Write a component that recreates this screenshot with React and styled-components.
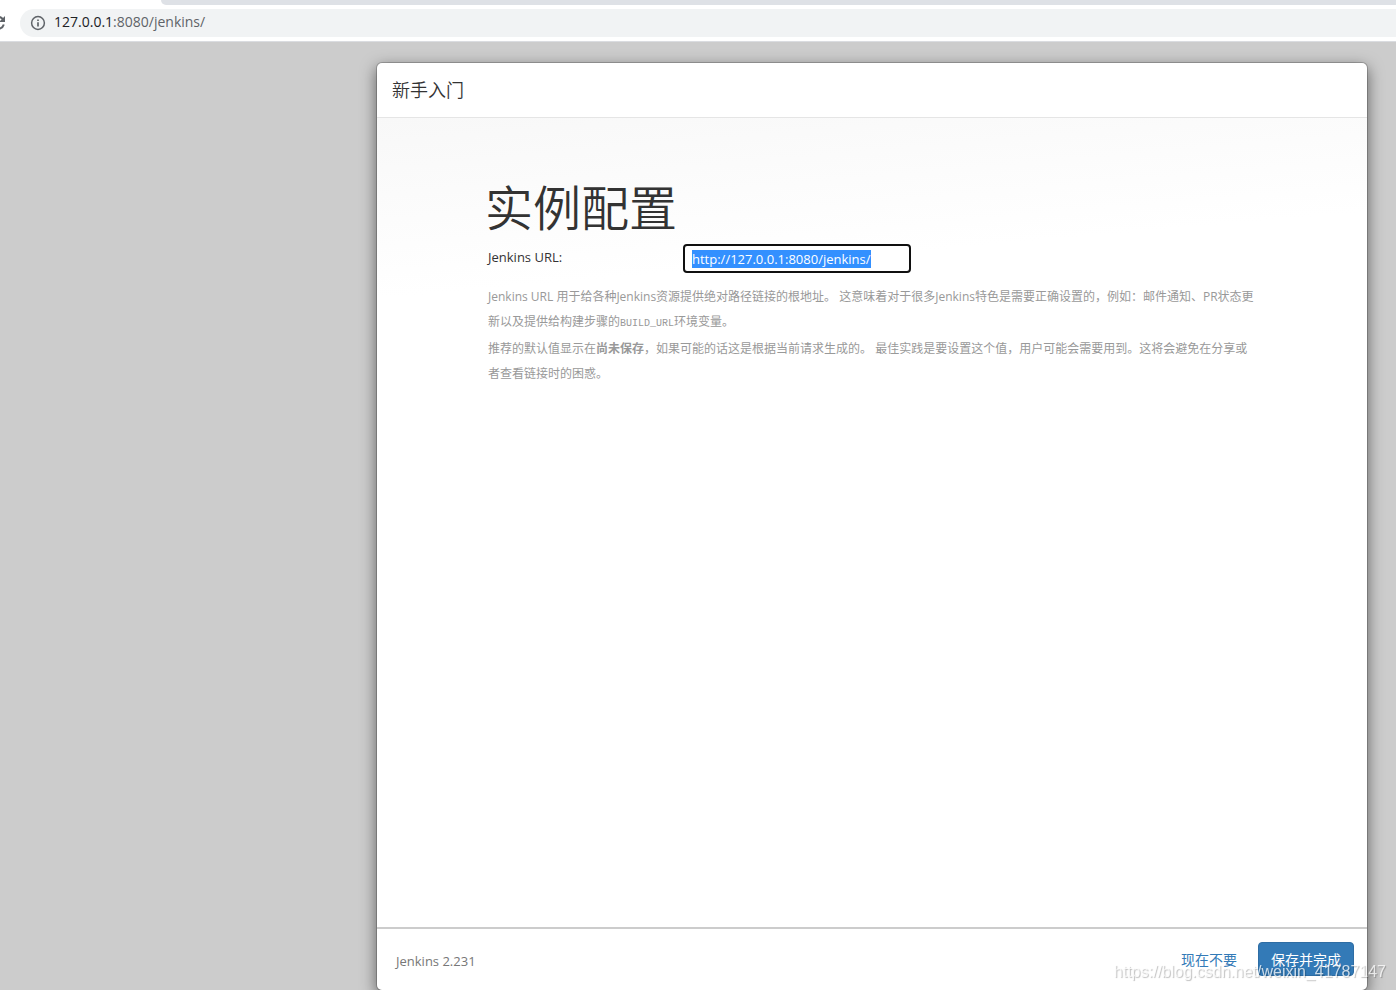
import React, { useEffect, useRef } from "react";
import styled, { createGlobalStyle } from "styled-components";

const GlobalStyle = createGlobalStyle`
  * {
    box-sizing: border-box;
  }

  body {
    margin: 0;
    overflow: hidden;
    background: #cccccc;
    color: #333333;
    font-family: "Open Sans", "Noto Sans CJK SC", sans-serif;
    font-size: 13px;
  }
`;

const Page = styled.div`
  display: flex;
  flex-direction: column;
  height: 100vh;
`;

const BrowserBar = styled.header`
  background: #ffffff;
  border-bottom: 1px solid #dadce0;
`;

const TabStrip = styled.div`
  height: 5px;
  margin-left: 161px;
  background: #dee1e6;
  border-bottom-left-radius: 6px;
`;

const Toolbar = styled.div`
  display: flex;
  align-items: center;
  padding: 4px 0;
`;

const ReloadButton = styled.button`
  display: flex;
  width: 16px;
  height: 16px;
  margin: 0 14px 0 -10px;
  padding: 0;
  border: 0;
  background: none;
  color: #5f6368;
`;

const AddressBar = styled.div`
  display: flex;
  flex: 1;
  align-items: center;
  gap: 8px;
  height: 28px;
  padding-left: 10px;
  background: #f1f3f4;
  border-radius: 14px 0 0 14px;
  color: #5f6368;
  font-size: 14px;
  line-height: 20px;

  span {
    padding-bottom: 2px;
  }

  b {
    color: #202124;
    font-weight: 400;
  }
`;

const Backdrop = styled.div`
  display: flex;
  flex: 1;
  min-height: 0;
  padding: 20px 28px 0;
`;

const Modal = styled.main`
  display: flex;
  flex: 1;
  flex-direction: column;
  max-width: 992px;
  margin-bottom: -1px;
  margin-left: auto;
  background: #ffffff;
  background-clip: padding-box;
  border: 1px solid rgba(0, 0, 0, 0.2);
  border-radius: 6px;
  box-shadow: 0 5px 15px rgba(0, 0, 0, 0.5);
`;

const ModalHeader = styled.div`
  padding: 15px;
  border-bottom: 1px solid #e5e5e5;
`;

const ModalTitle = styled.h4`
  margin: 0;
  font-size: 18px;
  font-weight: 350;
  line-height: 24px;
`;

const ModalBody = styled.div`
  flex: 1;
  padding: 60px 108px;
  background: linear-gradient(175deg, #f8f8f8, #ffffff 180px);
`;

const Heading = styled.h1`
  margin: 0 0 6px;
  font-size: 48px;
  font-weight: 350;
  line-height: 60px;
`;

const FormRow = styled.div`
  display: flex;
  align-items: flex-start;
  padding: 0 3px;
`;

const Label = styled.label`
  width: 195px;
  line-height: 26px;
`;

const UrlInput = styled.input`
  width: 228px;
  height: 29px;
  padding: 0 7px;
  background: #ffffff;
  border: 2px solid #101010;
  border-radius: 4px;
  outline: none;
  color: #333333;
  font-family: inherit;
  font-size: 13px;

  &::selection {
    background: #3390ff;
    color: #ffffff;
  }
`;

const Help = styled.div`
  margin-top: 11px;
  padding: 0 3px;
  color: #999999;
  font-size: 12px;
  line-height: 25px;

  p {
    margin: 0;
  }

  code {
    font-family: "Liberation Mono", monospace;
    font-size: 10px;
  }
`;

const ModalFooter = styled.div`
  display: flex;
  align-items: flex-start;
  height: 63px;
  padding: 13px;
  border-top: 2px solid #cccccc;
`;

const Version = styled.span`
  flex: 1;
  padding-left: 6px;
  color: #777777;
  font-size: 13px;
  line-height: 38px;
`;

const Button = styled.button`
  height: 34px;
  margin-left: 8px;
  padding: 0 12px;
  border: 1px solid ${({ $primary }) => ($primary ? "#2e6da4" : "transparent")};
  border-radius: 4px;
  background: ${({ $primary }) => ($primary ? "#337ab7" : "transparent")};
  color: ${({ $primary }) => ($primary ? "#ffffff" : "#337ab7")};
  font-family: inherit;
  font-size: 14px;
`;

const Watermark = styled.div`
  position: fixed;
  right: 10px;
  bottom: 8px;
  color: rgba(255, 255, 255, 0.75);
  font-family: "Liberation Sans", sans-serif;
  font-size: 16px;
  line-height: 20px;
  text-shadow: 1px 1px 1px rgba(0, 0, 0, 0.25);
  pointer-events: none;
`;

const ReloadIcon = () => (
  <svg width="16" height="16" viewBox="0 0 16 16" fill="none" aria-hidden="true">
    <path d="M13 4.5A6 6 0 1 0 13.8 9.5" stroke="currentColor" strokeWidth="2" />
    <path d="M15 1v6H9z" fill="currentColor" />
  </svg>
);

const InfoIcon = () => (
  <svg width="16" height="16" viewBox="0 0 16 16" fill="none" aria-hidden="true">
    <circle cx="8" cy="8" r="6.4" stroke="currentColor" strokeWidth="1.5" />
    <path d="M8 7.2v4.2M8 4.4v1.6" stroke="currentColor" strokeWidth="1.7" />
  </svg>
);

const App = () => {
  const urlRef = useRef(null);

  useEffect(() => {
    urlRef.current.focus();
    urlRef.current.select();
  }, []);

  return (
    <Page lang="zh-CN">
      <GlobalStyle />
      <BrowserBar>
        <TabStrip />
        <Toolbar>
          <ReloadButton type="button" aria-label="Reload">
            <ReloadIcon />
          </ReloadButton>
          <AddressBar>
            <InfoIcon />
            <span><b>127.0.0.1</b>:8080/jenkins/</span>
          </AddressBar>
        </Toolbar>
      </BrowserBar>
      <Backdrop>
        <Modal>
          <ModalHeader>
            <ModalTitle>新手入门</ModalTitle>
          </ModalHeader>
          <ModalBody>
            <Heading>实例配置</Heading>
            <FormRow>
              <Label htmlFor="root-url">Jenkins URL:</Label>
              <UrlInput
                id="root-url"
                type="text"
                ref={urlRef}
                spellCheck={false}
                defaultValue="http://127.0.0.1:8080/jenkins/"
              />
            </FormRow>
            <Help>
              <p>
                Jenkins URL 用于给各种Jenkins资源提供绝对路径链接的根地址。 这意味着对于很多Jenkins特色是需要正确设置的，例如：邮件通知、PR状态更新以及提供给构建步骤的<code>BUILD_URL</code>环境变量。
              </p>
              <p>
                推荐的默认值显示在<strong>尚未保存</strong>，如果可能的话这是根据当前请求生成的。 最佳实践是要设置这个值，用户可能会需要用到。这将会避免在分享或者查看链接时的困惑。
              </p>
            </Help>
          </ModalBody>
          <ModalFooter>
            <Version>Jenkins 2.231</Version>
            <Button type="button">现在不要</Button>
            <Button type="button" $primary>保存并完成</Button>
          </ModalFooter>
        </Modal>
      </Backdrop>
      <Watermark>https://blog.csdn.net/weixin_41787147</Watermark>
    </Page>
  );
};

export default App;
